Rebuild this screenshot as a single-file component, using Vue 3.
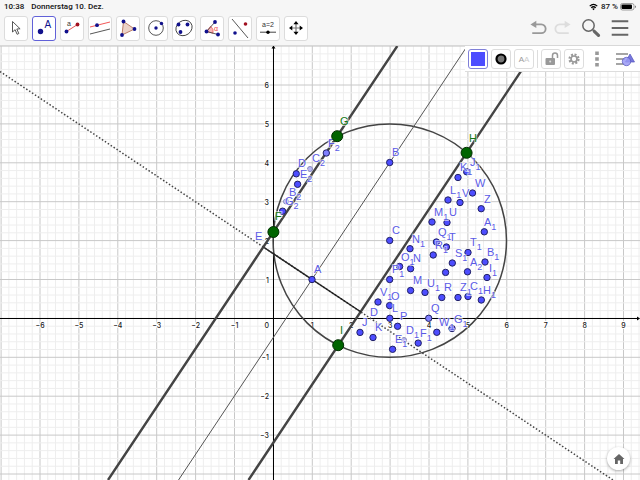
<script setup>
const ox = 273.4, oy = 318.4, unit = 38.9
const range = (a, b) => Array.from({ length: b - a + 1 }, (_, i) => a + i)
const gx = range(-35, 47).map(i => ({ p: ox + i * unit / 5, major: i % 5 === 0 }))
const gy = range(-21, 35).map(i => ({ p: oy - i * unit / 5, major: i % 5 === 0 }))
const fmt = n => (n < 0 ? '−' + -n : '' + n)
const xTicks = range(-6, 9).filter(n => n !== 0).map(n => ({ x: ox + n * unit, t: fmt(n) }))
const yTicks = range(-3, 6).filter(n => n !== 0).map(n => ({ y: oy - n * unit + 3, t: fmt(n) }))
const dots = [
  [312, 279.5], [389.7, 162.5], [389.7, 240.5], [296.3, 173.8], [297.6, 184.3], [282.6, 211.2],
  [458, 177.5], [472.5, 193], [481.2, 208.7], [448, 200], [460, 202.5], [432, 222], [447, 222.5],
  [484.3, 231.8], [410, 248.7], [433.2, 255], [468, 252.5], [452.3, 263], [485, 262], [410.6, 268.7],
  [445.6, 272.4], [467.5, 271.8], [487, 277.5], [389.7, 279.5], [410.6, 290.5], [425, 292.4],
  [441.8, 297.5], [458, 297.5], [481.3, 300], [378, 302], [389.6, 305.6], [389.8, 318.3],
  [397.6, 326.3], [360, 332.4], [373, 337.5], [392.6, 349.3], [418.2, 343.1], [436.8, 332.3],
  [466.7, 171.8], [436.4, 242], [446.4, 247], [399.6, 266.5], [468, 296.5], [452, 328.5]
]
const light = [[326.3, 153], [428.7, 318.3]]
const faded = [[310, 169], [286, 201.5], [404, 340]]
const anchors = [[273.4, 232], [337.2, 136.2], [466.6, 152.8], [338.2, 345.2]]
const labels = [
  ['A', 314, 273], ['B', 392, 156], ['C', 392, 234], ['E', 255, 240],
  ['D', 298, 167], ['C', 312, 162, 2], ['F', 328, 147, 2], ['E', 300, 178, 2], ['B', 289, 196, 2], ['G', 285, 205, 2],
  ['J', 470, 166, 1], ['K', 460, 171, 1], ['W', 475, 187], ['V', 462, 197], ['L', 450, 194, 1], ['Z', 484, 203],
  ['M', 434, 216, 1], ['U', 449, 216], ['A', 484, 226, 1], ['Q', 438, 236, 1], ['T', 449, 241],
  ['N', 412, 243, 1], ['R', 435, 249, 1], ['T', 470, 246, 1], ['S', 455, 257, 1], ['B', 487, 256, 1],
  ['O', 401, 261, 1], ['N', 413, 262], ['A', 470, 266, 2], ['I', 489, 272, 1], ['P', 392, 273, 1],
  ['M', 413, 284], ['U', 427, 287, 1], ['R', 444, 291], ['Z', 460, 291, 1], ['C', 470, 290, 1], ['H', 483, 294, 1],
  ['V', 380, 296, 1], ['O', 391, 300], ['D', 370, 316], ['L', 392, 312], ['Q', 431, 312], ['P', 400, 320],
  ['J', 362, 326], ['K', 375, 331], ['D', 406, 334, 1], ['E', 395, 343, 1], ['F', 420, 337, 1], ['W', 439, 326, 1], ['G', 454, 323, 1]
]
const greenLabels = [['G', 340, 125], ['H', 469, 142], ['F', 275, 220], ['I', 340, 334]]
const tools = ['Move', 'Point', 'Segment', 'Parallel line', 'Polygon', 'Circle', 'Conic', 'Angle', 'Reflect', 'Slider', 'Move view']
</script>

<template>
  <div class="app">
    <header class="status">
      <span class="time">10:38</span>
      <span class="date">Donnerstag 10. Dez.</span>
      <svg class="wifi" viewBox="0 0 10 8" aria-hidden="true">
        <path d="M.8 3Q5-.8 9.200 3M2.500 4.900Q5 2.600 7.500 4.900" fill="none" stroke="#000" stroke-width="1.400" />
        <path d="M3.500 6L5 7.700 6.500 6Q5 4.900 3.500 6" />
      </svg>
      <span class="percent">87 %</span>
      <svg class="battery" viewBox="0 0 17 8" aria-hidden="true">
        <rect x=".5" y=".5" width="13.500" height="6.500" rx="2" fill="none" stroke="#888" stroke-width=".8" />
        <rect x="1.500" y="1.500" width="10.500" height="4.500" rx="1" />
        <path d="M15 2.500v2.500q1-.4 1-1.200t-1-1.300" fill="#777" />
      </svg>
    </header>

    <nav class="toolbar" aria-label="Tools">
      <button v-for="(t, i) in tools" :key="t" class="tool" :class="{ active: i === 1 }" :aria-label="t">
        <svg viewBox="0 0 24 24">
          <path v-if="i === 0" d="M8.500 5.500V16l2.600-2.300 2 4.600 1.700-.8-2-4.500 3.300-.2z" fill="#fff" stroke="#444" stroke-width=".9" />
          <g v-else-if="i === 1">
            <circle cx="8.500" cy="15.500" r="2.700" fill="#11118c" /><text x="12.500" y="12" class="point-letter">A</text>
          </g>
          <g v-else-if="i === 2">
            <path d="M6.500 15.500L17.500 8.500" stroke="#e04040" stroke-width=".9" />
            <circle cx="6.500" cy="15.500" r="1.900" fill="#11118c" /><circle cx="17.500" cy="8.500" r="1.900" fill="#a01020" />
            <text x="7" y="10" class="small">a</text>
          </g>
          <g v-else-if="i === 3">
            <path d="M2 11L22 6" stroke="#f04444" stroke-width=".9" /><path d="M2 18L22 13" stroke="#444" stroke-width=".9" />
            <circle cx="9" cy="9.200" r="1.900" fill="#11118c" />
          </g>
          <g v-else-if="i === 4">
            <path d="M7.500 5.500L18.500 13 6 19z" fill="#ecd3c8" stroke="#b3705a" stroke-width=".9" />
            <circle cx="7.500" cy="5.500" r="1.900" fill="#11118c" /><circle cx="18.500" cy="13" r="1.900" fill="#11118c" /><circle cx="6" cy="19" r="1.900" fill="#11118c" />
          </g>
          <g v-else-if="i === 5">
            <circle cx="12" cy="12" r="7.300" fill="none" stroke="#444" stroke-width=".9" />
            <circle cx="12" cy="12" r="1.700" fill="#11118c" /><circle cx="17.500" cy="7.500" r="1.700" fill="#11118c" />
          </g>
          <g v-else-if="i === 6">
            <ellipse cx="12" cy="12" rx="8.500" ry="7.300" transform="rotate(-35 12 12)" fill="none" stroke="#444" stroke-width=".9" />
            <circle cx="6.500" cy="8.500" r="1.900" fill="#11118c" /><circle cx="15.500" cy="8.500" r="1.900" fill="#11118c" /><circle cx="8.500" cy="16" r="1.900" fill="#11118c" />
          </g>
          <g v-else-if="i === 7">
            <path d="M6.500 15.500L10.700 10.200Q14 13 13 17.200z" fill="#f9b5b5" stroke="#e55" stroke-width=".7" />
            <path d="M15 6L6.500 15.500 18 18.500" fill="none" stroke="#444" stroke-width=".9" />
            <circle cx="15" cy="6" r="1.900" fill="#11118c" /><circle cx="6.500" cy="15.500" r="1.900" fill="#11118c" /><circle cx="18" cy="18.500" r="1.900" fill="#11118c" />
            <text x="14" y="15" class="alpha">α</text>
          </g>
          <g v-else-if="i === 8">
            <path d="M4 3L20 22" stroke="#444" stroke-width=".9" />
            <circle cx="7" cy="17" r="1.800" fill="#11118c" /><circle cx="17.500" cy="8" r="1.800" fill="#a01020" />
          </g>
          <g v-else-if="i === 9">
            <text x="12" y="11" text-anchor="middle" class="small">a=2</text>
            <path d="M4 16.200H20" stroke="#444" /><circle cx="12" cy="16.200" r="1.700" />
          </g>
          <g v-else>
            <path d="M12 7v10M7 12h10" stroke="#777" stroke-width="1.200" />
            <path d="M12 5l2.600 3.300H9.400zM12 19l2.600-3.300H9.400zM5 12l3.300-2.600v5.200zM19 12l-3.300-2.600v5.200z" />
          </g>
        </svg>
      </button>
      <div class="actions">
        <button class="plain" aria-label="Undo"><svg viewBox="0 0 20 20"><path d="M5 6H12.500a4.900 4.900 0 010 9.800H2.500" fill="none" stroke="#999" stroke-width="2" /><path d="M.5 6L7 2v8z" fill="#999" /></svg></button>
        <button class="plain" aria-label="Redo"><svg viewBox="0 0 20 20"><path d="M15 6H7.500a4.900 4.900 0 000 9.800H17.500" fill="none" stroke="#ddd" stroke-width="2" /><path d="M19.500 6L13 2v8z" fill="#ddd" /></svg></button>
        <button class="plain search" aria-label="Search"><svg viewBox="0 0 20 20"><circle cx="7.500" cy="7.500" r="5.700" fill="none" stroke="#666" stroke-width="1.500" /><path d="M11.500 11.500L14 14" stroke="#666" stroke-width="1.500" /><path d="M13.300 13.300L17.500 17.300" stroke="#666" stroke-width="3.200" stroke-linecap="round" /></svg></button>
        <button class="plain menu" aria-label="Menu"><svg viewBox="0 0 20 20"><path d="M.8 2.500h18.400M.8 10h18.400M.8 17.500h18.400" stroke="#666" stroke-width="2.200" /></svg></button>
      </div>
    </nav>

    <main class="graph">
      <svg class="plane" viewBox="0 46 640 434" role="img" aria-label="Coordinate plane">
        <rect y="46" width="640" height="434" fill="#fff" />
        <path v-for="g in gx" :key="'a' + g.p" :d="`M${g.p} 46V480`" :class="g.major ? 'major' : 'minor'" />
        <path v-for="g in gy" :key="'b' + g.p" :d="`M0 ${g.p}H640`" :class="g.major ? 'major' : 'minor'" />
        <path d="M0 318.500H639M273.500 480V47" class="axis" />
        <path d="M640 318.500l-3-2v4zM273.500 45.500l-2 3h4z" />
        <g class="ticks">
          <text v-for="t in xTicks" :key="t.x" :x="t.x" y="328" text-anchor="middle">{{ t.t }}</text>
          <text v-for="t in yTicks" :key="t.y" x="269" :y="t.y" text-anchor="end">{{ t.t }}</text>
          <text x="269" y="328" text-anchor="end">0</text>
        </g>
        <circle cx="389.800" cy="240.600" r="116.700" class="circle" />
        <path d="M108 480L397.300 46M248.500 480L537.800 46" class="thick" />
        <path d="M178.500 480L467.300 46" class="thin" />
        <path d="M0 71.500L613 480" class="dotted" />
        <path d="M264 247.500L361 312" class="segment" />
        <circle v-for="d in faded" :key="'p' + d" :cx="d[0]" :cy="d[1]" r="2.500" class="dot faded" />
        <circle v-for="d in dots" :key="'d' + d" :cx="d[0]" :cy="d[1]" r="3.200" class="dot" />
        <circle v-for="d in light" :key="'l' + d" :cx="d[0]" :cy="d[1]" r="3.200" class="dot light" />
        <text v-for="(l, i) in labels" :key="i" :x="l[1]" :y="l[2]" class="label">{{ l[0] }}<tspan v-if="l[3]" dy="4" class="sub">{{ l[3] }}</tspan></text>
        <text v-for="l in greenLabels" :key="'n' + l[0]" :x="l[1]" :y="l[2]" class="label green">{{ l[0] }}</text>
        <circle v-for="d in anchors" :key="'g' + d" :cx="d[0]" :cy="d[1]" r="5.500" class="anchor" />
      </svg>

      <div class="stylebar">
        <button class="chip chosen" aria-label="Colour"><svg viewBox="0 0 20 20"><rect x="3" y="3" width="14" height="14" fill="#4d4dff" /></svg></button>
        <button class="chip" aria-label="Point style"><svg viewBox="0 0 20 20"><circle cx="10" cy="10" r="4.500" fill="#777" stroke="#000" stroke-width="2.200" /></svg></button>
        <button class="chip" aria-label="Label"><svg viewBox="0 0 20 20"><text x="10" y="13" text-anchor="middle" class="aa">A<tspan fill="#ccc">A</tspan></text></svg></button>
        <span class="divider"></span>
        <button class="chip" aria-label="Lock"><svg viewBox="0 0 20 20"><rect x="4.500" y="9" width="9.500" height="7" rx="1" fill="#999" /><path d="M11.500 9V6.500a2.500 2.500 0 015 0V9" fill="none" stroke="#999" stroke-width="1.500" /><circle cx="9.200" cy="12.500" r="1" fill="#ddd" /></svg></button>
        <button class="chip" aria-label="Settings"><svg viewBox="0 0 20 20"><circle cx="10" cy="10" r="4.500" fill="none" stroke="#999" stroke-width="2.200" stroke-dasharray="2 1.530" /><circle cx="10" cy="10" r="3" fill="none" stroke="#999" stroke-width="1.700" /></svg></button>
        <button class="more" aria-label="More"><svg viewBox="0 0 20 20"><path d="M8.200 2.500h3.600v3.600H8.200zM8.200 8.200h3.600v3.600H8.200zM8.200 13.900h3.600v3.600H8.200z" fill="#999" /></svg></button>
        <button class="views" aria-label="Views"><svg viewBox="0 0 20 20"><path d="M1 5h12M1 10h9M1 15h8" stroke="#888" stroke-width="1.500" /><path d="M15 5l4.500 8h-9z" fill="#7777dd" stroke="#5555bb" stroke-width=".7" /><circle cx="11.500" cy="12.500" r="4.200" fill="#9999f5" fill-opacity=".85" stroke="#5555bb" stroke-width=".7" /></svg></button>
      </div>
      <button class="home" aria-label="Standard view"><svg viewBox="0 0 12 12"><path d="M6 1L11.500 6H10v5H7.200V7.500H4.800V11H2V6H.5z" fill="#666" /></svg></button>
    </main>
  </div>
</template>

<style>
body { background: #fff; }
</style>

<style scoped>
* { box-sizing: border-box; }
.app { font-family: Inter, "Liberation Sans", sans-serif; color: #111; }
button { padding: 0; border: 0; background: none; display: flex; align-items: center; justify-content: center; }
svg { display: block; overflow: visible; }
.status { display: flex; align-items: center; height: 13px; padding: 0 3px 0 4px; background: #f6f6f6; font-family: Roboto, "Liberation Sans", sans-serif; font-size: 8px; font-weight: 500; }
.date { margin-left: 7px; }
.wifi { width: 9px; height: 8px; margin-left: auto; }
.percent { margin: 0 2px 0 3px; }
.battery { width: 17px; height: 8px; }
.toolbar { display: flex; align-items: center; gap: 4px; height: 33px; padding: 0 11px 2px 4px; background: #f6f6f6; border-bottom: 1px solid #d8d8d8; }
.tool { width: 24px; height: 25px; background: #fff; border: 1px solid #dcdcdc; border-radius: 3px; }
.tool svg { width: 24px; height: 24px; flex: none; }
.tool.active { border-color: #6161d8; }
.point-letter { font: 10px "Liberation Sans", sans-serif; fill: #11118c; }
.small { font-size: 7px; font-weight: 500; fill: #333; }
.alpha { font: 7px "Liberation Sans", sans-serif; fill: #e44; }
.actions { display: flex; align-items: center; gap: 5px; margin-left: auto; }
.plain svg { width: 18px; height: 18px; }
.search { margin-left: 5px; }
.search svg { width: 20px; height: 20px; }
.menu { margin-left: 5px; }
.graph { position: relative; }
.plane { width: 100%; height: auto; overflow: hidden; }
.minor { stroke: #eee; stroke-width: 1; }
.major { stroke: #c8c8c8; stroke-width: 1; }
.axis { stroke: #000; stroke-width: 1; fill: none; }
.ticks { font-size: 7px; font-weight: 500; fill: #222; stroke: #fff; stroke-width: 2px; paint-order: stroke; }
.circle { fill: none; stroke: #444; stroke-width: 1.500; }
.thick { stroke: #444; stroke-width: 2.400; }
.thin { stroke: #555; stroke-width: 1; }
.dotted { stroke: #444; stroke-width: 1.500; stroke-dasharray: 1.500 2; }
.segment { stroke: #222; stroke-width: 1.500; }
.dot { fill: #4d4dff; stroke: #222266; stroke-width: 1; }
.light { fill: #8080ff; }
.faded { fill: #b8b8f5; stroke: #8888bb; }
.anchor { fill: #006400; stroke: #003000; stroke-width: 1; }
.label { font: 11px "Liberation Sans", sans-serif; fill: #5a5ae6; stroke: #fff; stroke-width: 2px; stroke-opacity: .6; paint-order: stroke; }
.sub { font-size: 9px; }
.green { fill: #147814; }
.stylebar { position: absolute; top: 0; right: 0; display: flex; align-items: center; gap: 3px; height: 26px; padding: 0 5px 0 3px; background: #fff; border-bottom: 1px solid #ddd; }
.chip { width: 20px; height: 20px; border: 1px solid #ddd; border-radius: 3px; background: #fff; }
.chosen { border-color: #8080d8; }
.chip svg, .more svg { width: 20px; height: 20px; flex: none; }
.aa { font: 8px "Liberation Sans", sans-serif; fill: #999; }
.divider { width: 1px; height: 18px; background: #ddd; }
.more { width: 20px; height: 20px; }
.views { width: 20px; margin-left: 5px; }
.views svg { width: 20px; height: 20px; }
.home { position: absolute; right: 10px; bottom: 10px; width: 23px; height: 23px; border-radius: 50%; background: #fff; box-shadow: 0 1px 3px rgba(0, 0, 0, .35); }
.home svg { width: 12px; height: 12px; }
</style>
